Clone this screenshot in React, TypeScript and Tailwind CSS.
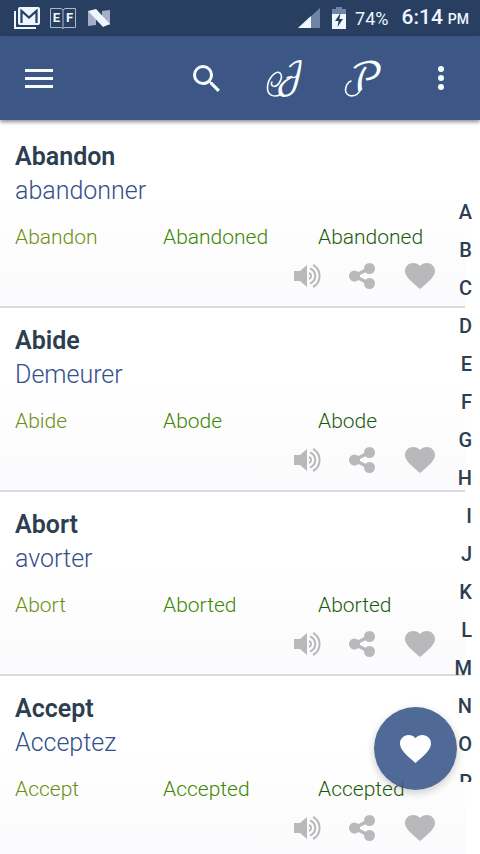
import React from "react";

interface Verb {
  base: string;
  translation: string;
  past: string;
  participle: string;
}

const VERBS: Verb[] = [
  { base: "Abandon", translation: "abandonner", past: "Abandoned", participle: "Abandoned" },
  { base: "Abide", translation: "Demeurer", past: "Abode", participle: "Abode" },
  { base: "Abort", translation: "avorter", past: "Aborted", participle: "Aborted" },
  { base: "Accept", translation: "Acceptez", past: "Accepted", participle: "Accepted" },
];

const LETTERS = "ABCDEFGHIJKLMNOP".split("");

const HEART =
  "M12 21.35l-1.45-1.32C5.4 15.36 2 12.28 2 8.5 2 5.42 4.42 3 7.5 3c1.74 0 3.41.81 4.5 2.09C13.09 3.81 14.76 3 16.5 3 19.58 3 22 5.42 22 8.5c0 3.78-3.4 6.86-8.55 11.54L12 21.35z";

function HeartIcon({ className }: { className: string }) {
  return (
    <svg viewBox="2 3 20 18.35" preserveAspectRatio="none" fill="currentColor" className={className} aria-hidden="true">
      <path d={HEART} />
    </svg>
  );
}

function SpeakerIcon() {
  return (
    <svg viewBox="0 0 28 24" className="h-6 w-7" aria-hidden="true">
      <path d="M0 7h6L13 1v22l-7-6H0z" fill="currentColor" />
      <g fill="none" stroke="currentColor" strokeWidth="2">
        <path d="M15 9a3.200 3.200 0 0 1 0 6" />
        <path d="M16 4.500a8 8 0 0 1 0 15" />
        <path d="M19 1a12.500 12.500 0 0 1 0 22" />
      </g>
    </svg>
  );
}

function ShareIcon() {
  return (
    <svg viewBox="0 0 26 26" className="size-[26px]" fill="currentColor" aria-hidden="true">
      <path d="M20 5.500L5.500 13L20 20.500" fill="none" stroke="currentColor" strokeWidth="3.500" />
      <circle cx="20.500" cy="5.500" r="5.500" />
      <circle cx="5.500" cy="13" r="5.500" />
      <circle cx="20.500" cy="20.500" r="5.500" />
    </svg>
  );
}

function StatusBar() {
  return (
    <div className="flex h-9 shrink-0 items-center justify-between bg-[#283f61] pr-[11px] pl-[14px] text-[#eef6ff]">
      <div className="flex items-center gap-[10px]">
        <svg viewBox="0 0 26 22" className="h-[22px] w-[26px]" aria-hidden="true">
          <path d="M1 4v17h21" fill="none" stroke="currentColor" strokeWidth="2" />
          <rect x="4" y="0" width="22" height="18" rx="2" fill="currentColor" />
          <path d="M7.500 16V4L15 10.500 22.500 4v12" fill="none" stroke="#283f61" strokeWidth="2.200" />
        </svg>
        <svg viewBox="0 0 26 22" className="h-[22px] w-[26px]" aria-hidden="true">
          <path d="M.5 1.500H11l2 1.500 2-1.500h10.500v19H15l-2 1-2-1H.5zM13 3v18" fill="none" stroke="#aab9cf" />
          <text x="6.500" y="15" textAnchor="middle" fontSize="13" fontWeight="700" fill="currentColor">E</text>
          <text x="19.500" y="15" textAnchor="middle" fontSize="13" fontWeight="700" fill="currentColor">F</text>
        </svg>
        <svg viewBox="0 0 22 18" className="ml-[2px] h-[18px] w-[22px]" aria-hidden="true">
          <path d="M0 2l8 3v11l-8 1zM22 1v15l-8-3V2z" fill="#a3afc6" />
          <path d="M0 2l8-2 14 15-7 3z" fill="currentColor" />
        </svg>
      </div>
      <div className="flex items-center">
        <svg viewBox="0 0 22 20" className="h-5 w-[22px]" aria-hidden="true">
          <path d="M0 20L22 0v20z" fill="#7084a5" />
          <path d="M0 20L13 8v12z" fill="currentColor" />
        </svg>
        <svg viewBox="0 0 14 22" className="ml-3 h-[22px] w-[14px]" aria-hidden="true">
          <path d="M0 7V2h4V0h6v2h4v5z" fill="#7084a5" />
          <path d="M0 7h14v15H0z" fill="currentColor" />
          <path d="M8.500 6L3 14h3.500L5.500 20l5.500-8H7.500z" fill="#283f61" />
        </svg>
        <span className="ml-[9px] text-[18px]">74%</span>
        <span className="ml-[13px] flex items-baseline gap-[5px] text-[21px] font-medium">
          6:14 <span className="text-[14px]">PM</span>
        </span>
      </div>
    </div>
  );
}

// Calligraphic capital with a swash on its left side
function ScriptIcon({ letter, size, x, y, swash }: { letter: string; size: number; x: number; y: number; swash: string }) {
  return (
    <svg viewBox="0 0 37 37" className="size-[37px] overflow-visible" aria-hidden="true">
      <text
        x={x}
        y={y}
        textAnchor="middle"
        fontSize={size}
        fill="currentColor"
        className="font-['DejaVu_Math_TeX_Gyre','DejaVu_Serif',serif]"
      >
        {letter}
      </text>
      <path d={swash} fill="none" stroke="currentColor" strokeWidth="1.600" strokeLinecap="round" />
    </svg>
  );
}

function AppBar() {
  return (
    <header className="z-10 flex h-[84px] shrink-0 items-center bg-[#3c5785] pr-9 pl-[25px] text-[#f7fcff] shadow-[0_2px_4px_rgba(0,0,0,0.45)]">
      <button type="button" aria-label="Menu" className="flex w-7 flex-col gap-[5px]">
        <span className="h-[3px] w-full bg-current" />
        <span className="h-[3px] w-full bg-current" />
        <span className="h-[3px] w-full bg-current" />
      </button>
      <div className="ml-auto flex items-center">
        <button type="button" aria-label="Search">
          <svg viewBox="3 3 17.500 17.500" className="size-[27px]" fill="currentColor" aria-hidden="true">
            <path d="M15.500 14h-.79l-.28-.27A6.471 6.471 0 0 0 16 9.500 6.500 6.500 0 1 0 9.500 16c1.610 0 3.090-.59 4.230-1.570l.27.28v.79l5 4.990L20.490 19l-4.990-5zm-6 0C7.010 14 5 11.990 5 9.500S7.010 5 9.500 5 14 7.010 14 9.500 11.990 14 9.500 14z" />
          </svg>
        </button>
        <button type="button" aria-label="Irregular verbs" className="ml-[47px]">
          <ScriptIcon
            letter="𝒥"
            size={36}
            x={23}
            y={28}
            swash="M14 34C8 38 0 36 .5 27C1 18 9 10 13 13C17 17 11 28 6 26C4 25 4 23 5 22M20 18C23 15 26 20 30 16"
          />
        </button>
        <button type="button" aria-label="Phrasal verbs" className="ml-[41px]">
          <ScriptIcon letter="𝒫" size={40} x={22} y={31} swash="M16 29C12 38 1 38 .5 30C.5 26 3 22 6 21" />
        </button>
        <button type="button" aria-label="More options" className="ml-[56px] flex flex-col gap-[3px]">
          <span className="size-[6px] rounded-full bg-current" />
          <span className="size-[6px] rounded-full bg-current" />
          <span className="size-[6px] rounded-full bg-current" />
        </button>
      </div>
    </header>
  );
}

function VerbRow({ verb }: { verb: Verb }) {
  return (
    <li className="h-[184px] border-b-2 border-[#dcdce0] bg-linear-to-b from-white from-40% to-[#fbfafc] pt-[17px] pl-[15px]">
      <h2 className="text-[25px] leading-8 font-semibold text-[#2c3e50]">{verb.base}</h2>
      <p className="text-[25px] leading-9 font-light text-[#34508a]">{verb.translation}</p>
      <div className="mt-[14px] grid grid-cols-[148px_155px_1fr] text-[21px] leading-7 font-light">
        <span className="text-[#6b9010]">{verb.base}</span>
        <span className="text-[#3a8800]">{verb.past}</span>
        <span className="text-[#1c5a0c]">{verb.participle}</span>
      </div>
      <div className="mt-3 flex items-center justify-end pr-[30px] text-[#b9b9bb]">
        <button type="button" aria-label={`Listen to ${verb.base}`}>
          <SpeakerIcon />
        </button>
        <button type="button" aria-label={`Share ${verb.base}`} className="ml-[27px]">
          <ShareIcon />
        </button>
        <button type="button" aria-label={`Add ${verb.base} to favorites`} className="ml-[30px]">
          <HeartIcon className="h-[26px] w-[30px]" />
        </button>
      </div>
    </li>
  );
}

export default function App() {
  return (
    <div className="flex h-screen flex-col overflow-hidden bg-white font-[Roboto,sans-serif]">
      <StatusBar />
      <AppBar />
      <main className="relative min-h-0 flex-1 pt-1">
        <ul className="mr-[15px] h-full overflow-hidden">
          {VERBS.map((verb) => (
            <VerbRow key={verb.base} verb={verb} />
          ))}
        </ul>

        {/* A-Z quick index */}
        <nav className="absolute top-[73px] right-2 bottom-[72px] flex flex-col overflow-hidden text-right text-[20px] leading-[38px] font-medium text-[#2c3e50]">
          {LETTERS.map((letter) => (
            <a key={letter} href={`#${letter}`}>
              {letter}
            </a>
          ))}
        </nav>

        <button
          type="button"
          aria-label="Favorites"
          className="absolute right-[23px] bottom-16 flex size-[83px] items-center justify-center rounded-full bg-[#3c5a8c]/90 text-white shadow-[0_3px_8px_rgba(0,0,0,0.2)]"
        >
          <HeartIcon className="h-7 w-[31px]" />
        </button>
      </main>
    </div>
  );
}
